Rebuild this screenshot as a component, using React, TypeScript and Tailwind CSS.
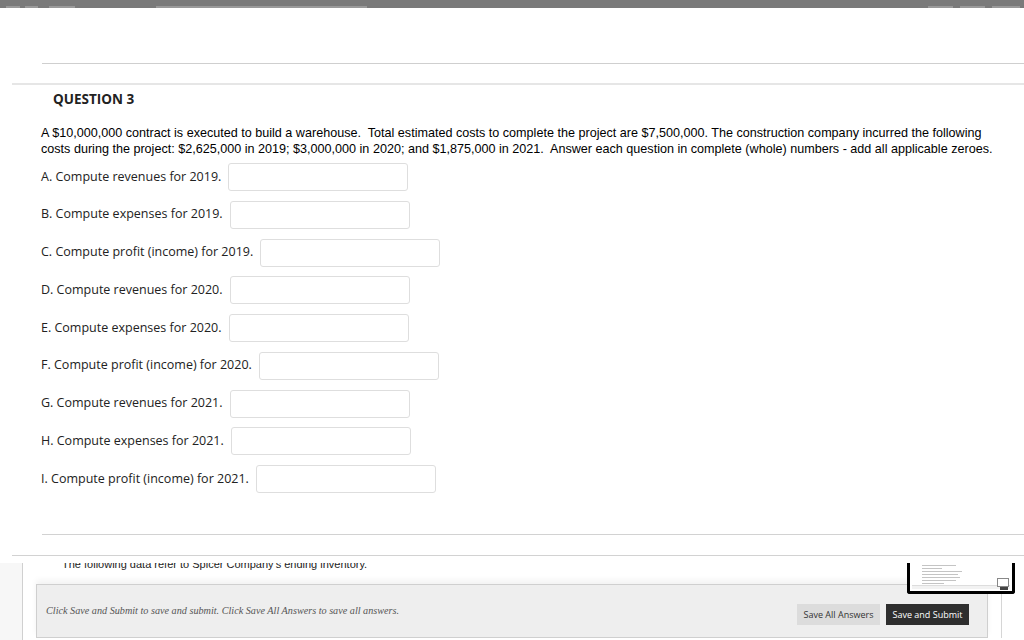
import React from 'react';

const rows = [
  'A. Compute revenues for 2019.',
  'B. Compute expenses for 2019.',
  'C. Compute profit (income) for 2019.',
  'D. Compute revenues for 2020.',
  'E. Compute expenses for 2020.',
  'F. Compute profit (income) for 2020.',
  'G. Compute revenues for 2021.',
  'H. Compute expenses for 2021.',
  'I. Compute profit (income) for 2021.',
];

function TopBar() {
  return (
    <div className="relative h-[8px] bg-[#7a7a7a]">
      <div className="absolute bottom-0 left-[6px] h-[2px] w-[14px] bg-[#9a9a9a]" />
      <div className="absolute bottom-0 left-[25px] h-[2px] w-[13px] bg-[#9a9a9a]" />
      <div className="absolute bottom-0 left-[49px] h-[2px] w-[26px] bg-[#9a9a9a]" />
      <div className="absolute bottom-0 left-[156px] h-[2px] w-[211px] bg-[#9a9a9a]" />
      <div className="absolute bottom-0 left-[928px] h-[2px] w-[25px] bg-[#9a9a9a]" />
      <div className="absolute bottom-0 left-[960px] h-[2px] w-[25px] bg-[#9a9a9a]" />
      <div className="absolute bottom-0 left-[992px] h-[2px] w-[28px] bg-[#9a9a9a]" />
    </div>
  );
}

function Thumbnail() {
  return (
    <div className="absolute left-[907px] top-0 h-[31px] w-[108px] overflow-hidden rounded-b-[3px] border-x-[3px] border-b-[3px] border-black bg-white">
      <div className="flex flex-col gap-[2px] pl-[12px] pt-[2px]">
        <div className="h-px w-[34px] bg-[#c4c4c4]" />
        <div className="h-px w-[20px] bg-[#c4c4c4]" />
        <div className="h-px w-[40px] bg-[#c4c4c4]" />
        <div className="h-px w-[36px] bg-[#c4c4c4]" />
        <div className="h-px w-[38px] bg-[#c4c4c4]" />
        <div className="h-px w-[34px] bg-[#c4c4c4]" />
        <div className="h-px w-[22px] bg-[#c4c4c4]" />
      </div>
      <div className="absolute bottom-[2px] left-[2px] right-[2px] h-[4px] border-t border-[#ddd] bg-[#f2f2f2]" />
      <div className="absolute bottom-[1px] right-[4px] h-[3px] w-[8px] bg-[#444]" />
      <div className="absolute bottom-[4px] right-[3px] h-[9px] w-[12px] border border-[#888] bg-white" />
    </div>
  );
}

export default function App() {
  return (
    <div className="flex h-[640px] w-[1024px] flex-col overflow-hidden bg-white">
      <TopBar />
      <div className="h-[55px]" />
      <div className="ml-[42px] h-px bg-[#cfcfcf]" />
      <div className="h-[19px]" />
      <div className="ml-[12px] h-[2px] bg-[#e6e6e6]" />

      <div className="h-[449px] pl-[41px]">
        <h2 className="ml-[12px] mt-[5px] text-[13.5px] font-bold leading-[18px] text-[#222] [font-family:'Open_Sans',sans-serif]">
          QUESTION 3
        </h2>
        <p className="mt-[17px] pr-[20px] text-[12.6px] leading-[16px] text-black [font-family:'Liberation_Sans',Arial,sans-serif]">
          A $10,000,000 contract is executed to build a warehouse.&nbsp; Total estimated costs to complete the project are $7,500,000. The construction company incurred the following costs during the project: $2,625,000 in 2019; $3,000,000 in 2020; and $1,875,000 in 2021.&nbsp; Answer each question in complete (whole) numbers - add all applicable zeroes.
        </p>
        <div className="mt-[6px] flex flex-col gap-[9.75px]">
          {rows.map((label) => (
            <div key={label} className="flex h-[28px] items-center gap-[7px]">
              <span className="text-[12.5px] text-[#222] [font-family:'Open_Sans',sans-serif]">{label}</span>
              <input
                type="text"
                className="h-[28px] w-[180px] rounded-[3px] border border-[#dedede] bg-white outline-none"
              />
            </div>
          ))}
        </div>
      </div>

      <div className="ml-[42px] h-px bg-[#d2d2d2]" />
      <div className="h-[20px]" />
      <div className="ml-[12px] h-px bg-[#d2d2d2]" />
      <div className="h-[7px]" />

      <div className="relative flex flex-1">
        <div className="w-[23px] border-r border-[#d0d0d0] bg-[#f7f7f7]" />
        <div className="flex flex-1 flex-col">
          <div className="h-[8px] overflow-hidden pl-[39px]">
            <div className="-mt-[6px] text-[11px] leading-[14px] text-[#222] [font-family:'Liberation_Sans',Arial,sans-serif]">
              The following data refer to Spicer Company's ending inventory.
            </div>
          </div>
          <div className="flex flex-1 pb-[2px] pt-[13px]">
            <div className="ml-[13px] flex w-[952px] items-start justify-between border border-[#cfcfcf] bg-[#eeeeee] pl-[9px] pr-[18px] pt-[19px] shadow-[0_-4px_6px_rgba(0,0,0,0.05)]">
              <span className="text-[10.2px] italic leading-[14px] text-[#555] [font-family:'Liberation_Serif',Georgia,serif]">
                Click Save and Submit to save and submit. Click Save All Answers to save all answers.
              </span>
              <div className="flex gap-[6px]">
                <button className="h-[21px] w-[83px] bg-[#dcdcdc] text-[9px] text-[#333] [font-family:'Open_Sans',sans-serif]">
                  Save All Answers
                </button>
                <button className="h-[21px] w-[83px] bg-[#2e2e2e] text-[9px] text-white [font-family:'Open_Sans',sans-serif]">
                  Save and Submit
                </button>
              </div>
            </div>
            <div className="ml-[13px] w-px bg-[#d6d6d6]" />
          </div>
        </div>
        <Thumbnail />
      </div>
    </div>
  );
}
